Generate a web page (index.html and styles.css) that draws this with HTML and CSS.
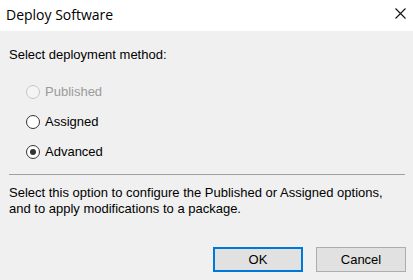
FILE: index.html
```html
<!DOCTYPE html>
<html>
<head>
<meta charset="utf-8">
<link rel="stylesheet" href="styles.css">
</head>
<body>
<div class="dialog">
  <div class="titlebar">
    <span class="title">Deploy Software</span>
    <svg class="close" width="11" height="11" viewBox="0 0 11 11"><path d="M0.5 0.5L10.5 10.5M10.5 0.5L0.5 10.5" stroke="#111" stroke-width="1.1" fill="none"/></svg>
  </div>
  <div class="content">
    <div class="prompt">Select deployment method:</div>
    <div class="options">
      <label class="opt disabled"><span class="radio"></span><span>Published</span></label>
      <label class="opt"><span class="radio"></span><span>Assigned</span></label>
      <label class="opt"><span class="radio checked"></span><span>Advanced</span></label>
    </div>
    <div class="sep"></div>
    <p class="desc">Select this option to configure the Published or Assigned options,<br>and to apply modifications to a package.</p>
    <div class="buttons">
      <button class="btn default">OK</button>
      <button class="btn">Cancel</button>
    </div>
  </div>
</div>
</body>
</html>
```
FILE: styles.css
```css
html, body {
  margin: 0;
  padding: 0;
  width: 413px;
  height: 280px;
  overflow: hidden;
  background: #f0f0f0;
}
.dialog {
  width: 413px;
  height: 280px;
  display: flex;
  flex-direction: column;
  font-family: "Liberation Sans", Arial, sans-serif;
  font-size: 13px;
  color: #000;
}
.titlebar {
  height: 31px;
  background: #fff;
  display: flex;
  align-items: center;
  justify-content: space-between;
  padding: 0 7px 0 6px;
  box-sizing: border-box;
}
.title {
  font-family: "Open Sans", "Noto Sans", sans-serif;
  font-size: 14px;
  margin-top: -3px;
}
.close {
  margin-top: -5px;
}
.content {
  flex: 1;
  padding: 0 7px 0 9px;
  display: flex;
  flex-direction: column;
}
.prompt {
  margin-top: 16px;
  line-height: 16px;
}
.options {
  margin-top: 21px;
  margin-left: 17px;
  display: flex;
  flex-direction: column;
  gap: 14px;
}
.opt {
  display: flex;
  align-items: center;
  gap: 5px;
  height: 16px;
  line-height: 16px;
}
.opt.disabled {
  color: #9a9a9a;
}
.radio {
  width: 12px;
  height: 12px;
  border: 1px solid #333;
  border-radius: 50%;
  background: #fff;
  display: flex;
  align-items: center;
  justify-content: center;
}
.opt.disabled .radio {
  border-color: #c6c6c6;
  background: #f4f4f4;
}
.radio.checked::after {
  content: "";
  width: 6px;
  height: 6px;
  border-radius: 50%;
  background: #333;
}
.sep {
  margin-top: 14px;
  height: 1px;
  background: #a0a0a0;
  margin-right: 1px;
}
.desc {
  margin: 10px 0 0 0;
  line-height: 16px;
}
.buttons {
  margin-top: 30px;
  display: flex;
  justify-content: flex-end;
  gap: 13px;
}
.btn {
  width: 90px;
  height: 25px;
  background: #e1e1e1;
  border: 1px solid #adadad;
  font-family: "Liberation Sans", Arial, sans-serif;
  font-size: 13px;
  color: #000;
  padding: 0;
  margin: 0;
}
.btn.default {
  border: 2px solid #0078d7;
}
```
